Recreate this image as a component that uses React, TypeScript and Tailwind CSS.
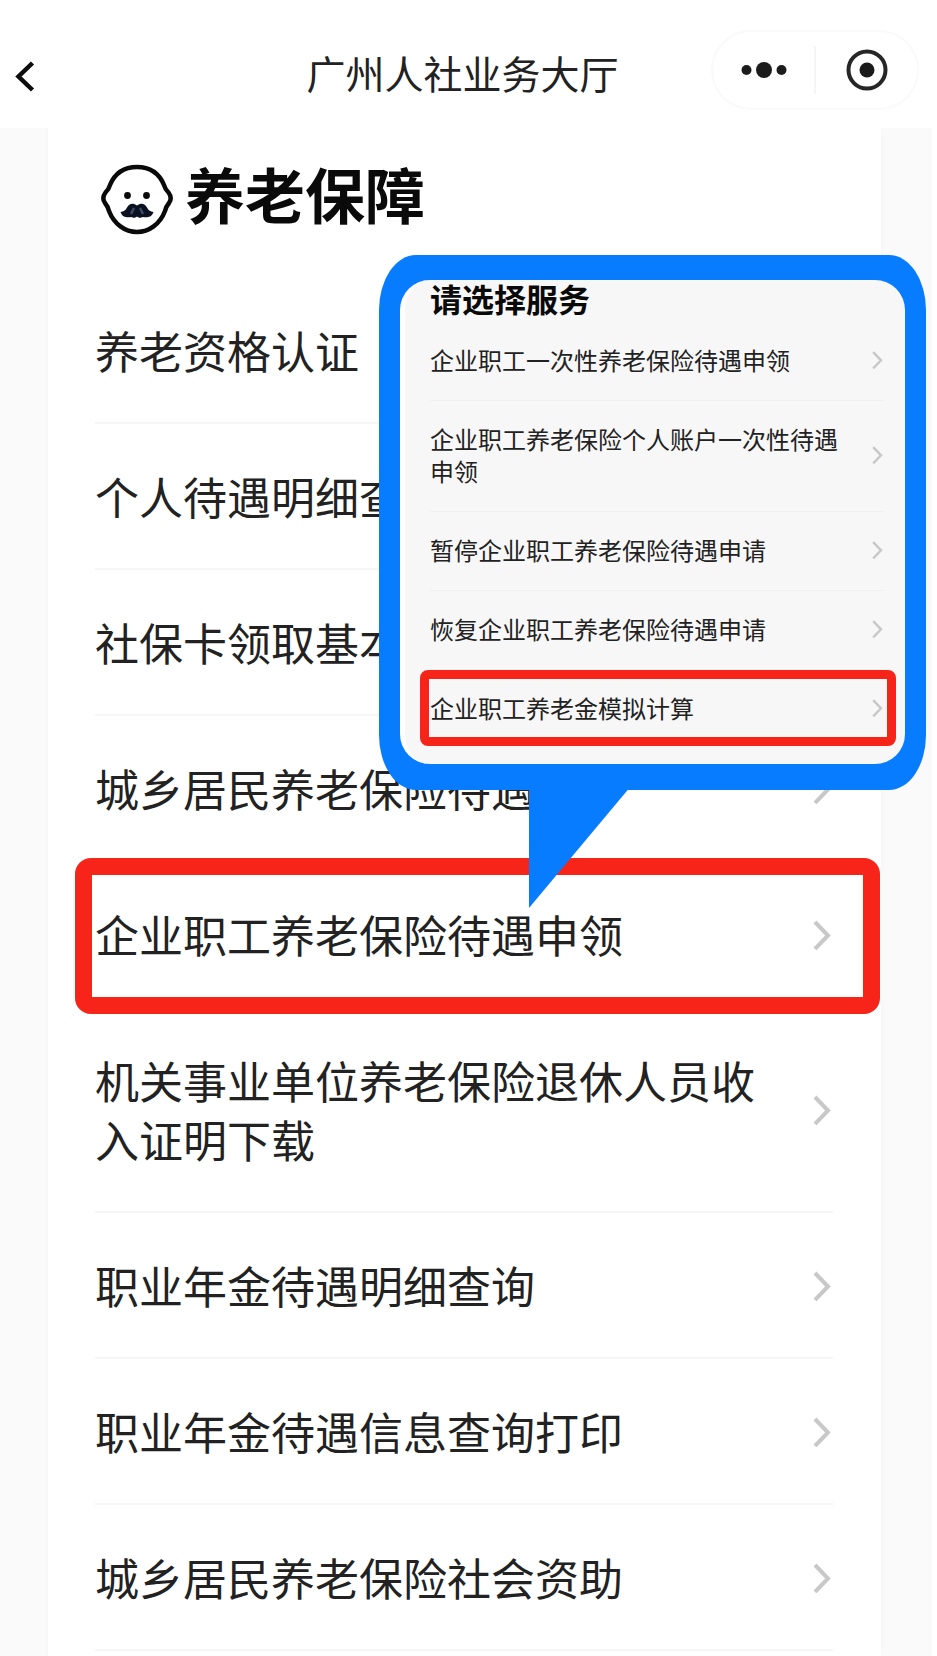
interface ServiceItem {
  text: string;
  marked?: boolean;
}

const services: ServiceItem[] = [
  { text: "养老资格认证" },
  { text: "个人待遇明细查询" },
  { text: "社保卡领取基本养老金" },
  { text: "城乡居民养老保险待遇" },
  { text: "企业职工养老保险待遇申领", marked: true },
  { text: "机关事业单位养老保险退休人员收入证明下载" },
  { text: "职业年金待遇明细查询" },
  { text: "职业年金待遇信息查询打印" },
  { text: "城乡居民养老保险社会资助" },
];

const subServices: ServiceItem[] = [
  { text: "企业职工一次性养老保险待遇申领" },
  { text: "企业职工养老保险个人账户一次性待遇申领" },
  { text: "暂停企业职工养老保险待遇申请" },
  { text: "恢复企业职工养老保险待遇申请" },
  { text: "企业职工养老金模拟计算", marked: true },
];

const Chevron = ({ className }: { className: string }) => (
  <svg viewBox="0 0 20 30" fill="none" aria-hidden="true" className={`shrink-0 ${className}`}>
    <path d="M2 2 L15 15.5 L2 29" stroke="#c8c8c8" strokeWidth="4" />
  </svg>
);

const ElderIcon = () => (
  <svg viewBox="0 0 72 72" fill="none" aria-hidden="true" className="w-[72px] h-[72px] shrink-0">
    <path
      d="M36 4 C48 4 58 10 63 22 C64 26 65 27 67.500 29.500 C70.500 33.500 70.500 36.500 68 40 C65.500 43 65 44 64 48 C59 61 48 69 36 69 C24 69 13 61 8 48 C7 44 6.500 43 4 40 C1.500 36.500 1.500 33.500 4.500 29.500 C7 27 8 26 9 22 C14 10 24 4 36 4 Z"
      stroke="#0a0a0a"
      strokeWidth="4.500"
    />
    <circle cx="26.500" cy="32.500" r="3.400" fill="#0a0a0a" />
    <circle cx="45.500" cy="32.500" r="3.400" fill="#0a0a0a" />
    <path
      d="M36 42.500 C32 39.500 28 40.500 26 44.500 C24.500 47.500 22.500 48.500 19.500 49 C21 54 26 55 30 54 C33 55.500 35 54.500 36 53.500 C37 54.500 39 55.500 42 54 C46 55 51 54 52.500 49 C49.500 48.500 47.500 47.500 46 44.500 C44 40.500 40 39.500 36 42.500 Z"
      fill="#0a1222"
    />
    <path d="M33 45 L30 51 M39 45 L42 51" stroke="#3d4a66" strokeWidth="2.500" />
  </svg>
);

const Header = () => (
  <header className="relative z-10 grid grid-cols-[202px_1fr_208px] items-center h-32 pl-3 pr-[18px] bg-white">
    <button type="button" aria-label="返回" className="justify-self-start mt-6 p-0">
      <svg viewBox="0 0 24 32" fill="none" className="w-6 h-8">
        <path d="M20.500 3 L6.500 16.500 L20.500 30" stroke="#0d0d0d" strokeWidth="4.500" />
      </svg>
    </button>
    <h1 className="mt-4 text-center text-[39px] leading-[48px] text-[#222] whitespace-nowrap">
      广州人社业务大厅
    </h1>
    <div className="flex items-center h-20 mt-3 rounded-full border-2 border-[#fafafa]">
      <button type="button" aria-label="更多" className="flex flex-1 justify-center">
        <svg viewBox="0 0 46 18" className="w-[46px] h-[18px]" fill="#1c1c1c">
          <circle cx="5.500" cy="9" r="5" />
          <circle cx="23" cy="9" r="8" />
          <circle cx="40.500" cy="9" r="5" />
        </svg>
      </button>
      <div className="w-0.5 h-12 bg-[#f5f5f5]" />
      <button type="button" aria-label="关闭" className="flex flex-1 justify-center">
        <svg viewBox="0 0 42 42" className="w-[42px] h-[42px]" fill="none">
          <circle cx="21" cy="21" r="18.500" stroke="#262626" strokeWidth="4" />
          <circle cx="21" cy="21" r="7.500" fill="#1a1a1a" />
        </svg>
      </button>
    </div>
  </header>
);

const ServiceRow = ({ text, marked }: ServiceItem) => (
  <li className="relative border-b-2 border-[#f6f6f6]">
    <a href="#" className="flex items-center justify-between pt-[43px] pb-[42px]">
      <span className="max-w-[670px] text-[44px] leading-[59px] text-[#222]">{text}</span>
      <Chevron className="w-5 h-[30px]" />
    </a>
    {marked && (
      <div className="absolute -left-5 -right-[47px] -top-1 -bottom-2 border-[17px] border-[#f72519] rounded-2xl pointer-events-none" />
    )}
  </li>
);

const SubServiceRow = ({ text, marked }: ServiceItem) => (
  <li className="relative border-b border-[#f0f0f0] last:border-transparent">
    <a href="#" className="flex items-center justify-between pt-[22px] pb-6">
      <span className="max-w-[410px] text-2xl leading-8 text-[#222]">{text}</span>
      <Chevron className="w-3 h-[18px]" />
    </a>
    {marked && (
      <div className="absolute top-0 bottom-0.5 -left-2.5 -right-3 border-[9px] border-[#f72519] rounded-lg pointer-events-none" />
    )}
  </li>
);

const ServiceCallout = () => (
  <section className="absolute top-[255px] left-[379px] right-[11px] z-20 px-[21px] pt-[25px] pb-[26px] bg-[#087cff] rounded-[37px/55px]">
    <div className="pl-[25px] pr-[21px] pb-[15px] bg-[#f7f7f7] border-l-[5px] border-white rounded-[30px] overflow-clip">
      <h3 className="text-[32px] leading-9 pb-1.5 font-bold text-[#0a0a0a]">请选择服务</h3>
      <ul>
        {subServices.map((item) => (
          <SubServiceRow key={item.text} {...item} />
        ))}
      </ul>
    </div>
    {/* Pointer down to the marked row */}
    <svg viewBox="0 0 99 118" className="absolute top-full left-[150px] w-[99px] h-[118px]" fill="#087cff">
      <path d="M0 -1 H99.500 L0 118 Z" />
    </svg>
  </section>
);

export default function App() {
  return (
    <div className="relative flex flex-col min-h-screen overflow-hidden bg-white font-['Noto_Sans_CJK_SC','Noto_Sans',sans-serif]">
      <Header />
      <div className="flex grow mr-[5px] pl-12 pr-[51px] bg-[#fafafa]">
        <main className="grow pl-[47px] pr-12 bg-white shadow-[0_0_6px_rgba(0,0,0,0.03)]">
          <div className="flex items-start gap-3 pt-[35px] pb-[43px] pl-1.5">
            <ElderIcon />
            <h2 className="text-[60px] leading-[60px] font-bold text-[#0a0a0a]">养老保障</h2>
          </div>
          <ul>
            {services.map((item) => (
              <ServiceRow key={item.text} {...item} />
            ))}
          </ul>
        </main>
      </div>
      <ServiceCallout />
    </div>
  );
}
